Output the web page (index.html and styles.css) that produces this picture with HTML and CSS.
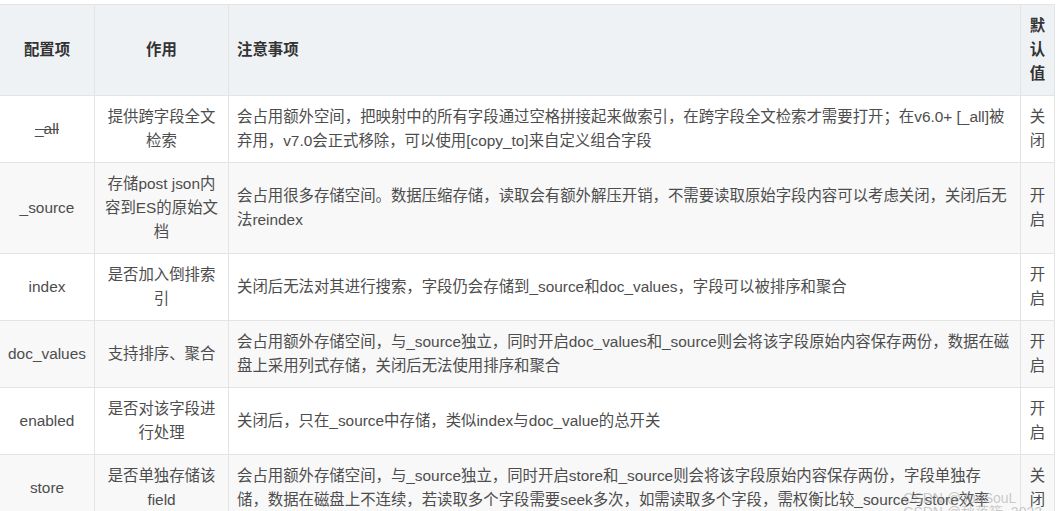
FILE: index.html
```html
<!DOCTYPE html>
<html lang="zh-CN">
<head>
  <meta charset="UTF-8">
  <meta name="viewport" content="width=device-width, initial-scale=1">
  <title>Mapping 配置项</title>
  <link rel="stylesheet" href="styles.css">
</head>
<body>
  <div class="article">
    <table class="config-table">
      <colgroup>
        <col class="col-name">
        <col class="col-use">
        <col class="col-note">
        <col class="col-default">
      </colgroup>
      <thead>
        <tr>
          <th class="center">配置项</th>
          <th class="center">作用</th>
          <th class="note">注意事项</th>
          <th class="center">默认值</th>
        </tr>
      </thead>
      <tbody>
        <tr>
          <td class="center"><s>_all</s></td>
          <td class="center">提供跨字段全文检索</td>
          <td class="note">会占用额外空间，把映射中的所有字段通过空格拼接起来做索引，在跨字段全文检索才需要打开；在v6.0+ [_all]被弃用，v7.0会正式移除，可以使用[copy_to]来自定义组合字段</td>
          <td class="center">关闭</td>
        </tr>
        <tr>
          <td class="center">_source</td>
          <td class="center">存储post json内容到ES的原始文档</td>
          <td class="note">会占用很多存储空间。数据压缩存储，读取会有额外解压开销，不需要读取原始字段内容可以考虑关闭，关闭后无法reindex</td>
          <td class="center">开启</td>
        </tr>
        <tr>
          <td class="center">index</td>
          <td class="center">是否加入倒排索引</td>
          <td class="note">关闭后无法对其进行搜索，字段仍会存储到_source和doc_values，字段可以被排序和聚合</td>
          <td class="center">开启</td>
        </tr>
        <tr>
          <td class="center">doc_values</td>
          <td class="center">支持排序、聚合</td>
          <td class="note">会占用额外存储空间，与_source独立，同时开启doc_values和_source则会将该字段原始内容保存两份，数据在磁盘上采用列式存储，关闭后无法使用排序和聚合</td>
          <td class="center">开启</td>
        </tr>
        <tr>
          <td class="center">enabled</td>
          <td class="center">是否对该字段进行处理</td>
          <td class="note">关闭后，只在_source中存储，类似index与doc_value的总开关</td>
          <td class="center">开启</td>
        </tr>
        <tr>
          <td class="center">store</td>
          <td class="center">是否单独存储该field</td>
          <td class="note">会占用额外存储空间，与_source独立，同时开启store和_source则会将该字段原始内容保存两份，字段单独存储，数据在磁盘上不连续，若读取多个字段需要seek多次，如需读取多个字段，需权衡比较_source与store效率</td>
          <td class="center">关闭</td>
        </tr>
      </tbody>
    </table>

    <div class="watermark">
      <span>CSDN @JunSouL</span>
      <span>CSDN @秋落筱_2023</span>
    </div>
  </div>
</body>
</html>
```

FILE: styles.css
```css
body {
  margin: 0;
  background-color: #fff;
  font-family: "Liberation Sans", "Noto Sans CJK SC", sans-serif;
  color: #4d4d4d;
  overflow: hidden;
}
.article {
  position: relative;
  padding-top: 4px;
  height: 507px;
}
.config-table {
  border-collapse: collapse;
  table-layout: fixed;
  width: 1055px;
  margin-left: -1px;
  font-size: 15.4px;
  line-height: 24px;
}
.col-name {
  width: 95px;
}
.col-use {
  width: 134px;
}
.col-note {
  width: 792px;
}
.col-default {
  width: 34px;
}
th, td {
  border: 1px solid #e4e4e4;
  padding: 9px 8px;
  text-align: left;
  vertical-align: middle;
}
th {
  background-color: #eff2f5;
  color: #333;
  font-weight: bold;
}
tbody tr:nth-child(even) {
  background-color: #f8f8f8;
}
.center {
  text-align: center;
}
.note {
  padding-right: 10px;
}
.watermark {
  position: absolute;
  right: 16px;
  bottom: -8px;
  display: flex;
  flex-direction: column;
  align-items: flex-start;
  font-size: 14px;
  line-height: 14px;
  color: rgba(160, 160, 160, 0.55);
  pointer-events: none;
}
```
